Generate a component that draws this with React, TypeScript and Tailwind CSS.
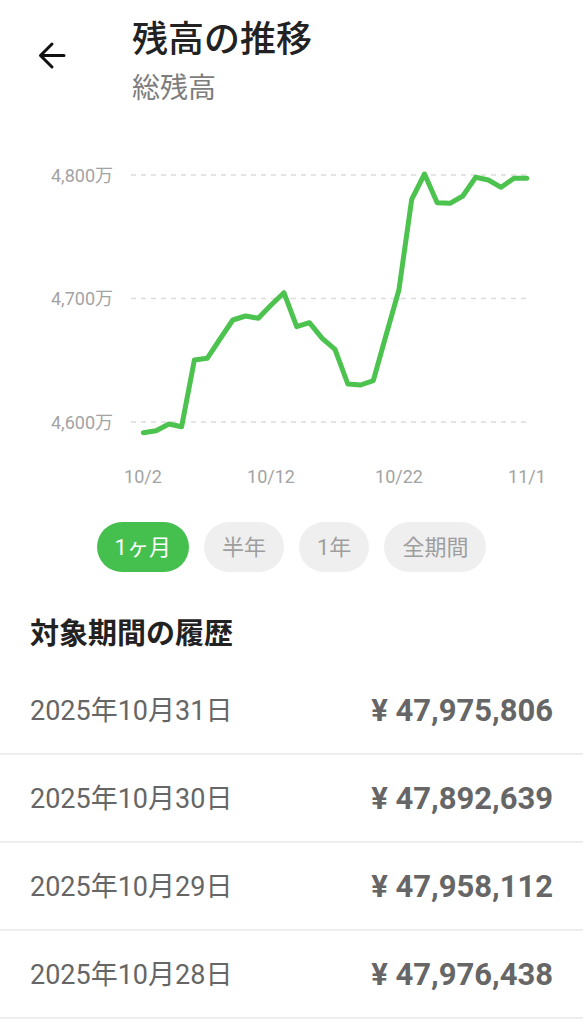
import React from "react";

const ys = [
  432.7, 430.7, 424, 426.7, 360, 358.3, 339, 320, 316, 318.3, 305, 292.7, 326.7,
  322.7, 338.3, 349.3, 384, 385, 380.7, 335, 290, 199.3, 174, 202.7, 203.3, 196,
  177.3, 180, 187.3, 178.3, 178.3,
];

const points = ys.map((y, i) => `${(143.3 + i * 12.78).toFixed(1)},${y}`).join(" ");

const grid = [
  { y: 175, label: "4,800万" },
  { y: 298.5, label: "4,700万" },
  { y: 422, label: "4,600万" },
];

const xLabels = [
  { x: 143, label: "10/2" },
  { x: 271, label: "10/12" },
  { x: 399, label: "10/22" },
  { x: 527, label: "11/1" },
];

const rows = [
  { date: "2025年10月31日", amount: "¥ 47,975,806" },
  { date: "2025年10月30日", amount: "¥ 47,892,639" },
  { date: "2025年10月29日", amount: "¥ 47,958,112" },
  { date: "2025年10月28日", amount: "¥ 47,976,438" },
];

const pills = [
  { label: "1ヶ月", active: true },
  { label: "半年", active: false },
  { label: "1年", active: false },
  { label: "全期間", active: false },
];

export default function App() {
  return (
    <div className="w-[583px] min-h-[1024px] bg-white font-[Roboto,'Noto_Sans_CJK_JP',sans-serif] overflow-hidden">
      {/* Header */}
      <div className="flex items-start pt-[20px]">
        <div className="ml-[37px] mt-[21px] h-[29px] w-[29px]">
          <svg width="29" height="29" viewBox="0 0 29 29" fill="none">
            <path
              d="M27 14.5H3.5M15 3L3.5 14.5L15 26"
              stroke="#111"
              strokeWidth="3"
              strokeLinecap="round"
              strokeLinejoin="round"
            />
          </svg>
        </div>
        <div className="ml-[66px] flex flex-col">
          <div className="text-[36px] leading-[40px] text-[#222] font-medium">残高の推移</div>
          <div className="mt-[13px] text-[28px] leading-[32px] text-[#7d7d7d]">総残高</div>
        </div>
      </div>

      {/* Chart */}
      <svg width="583" height="395" viewBox="0 105 583 395" className="block">
        {grid.map((g) => (
          <g key={g.label}>
            <line
              x1="131"
              x2="527"
              y1={g.y}
              y2={g.y}
              stroke="#dcdcdc"
              strokeWidth="1.5"
              strokeDasharray="5 5"
            />
            <text
              x="113"
              y={g.y}
              textAnchor="end"
              dominantBaseline="central"
              fontSize="18"
              fill="#a3a3a3"
            >
              {g.label}
            </text>
          </g>
        ))}
        {xLabels.map((l) => (
          <text
            key={l.label}
            x={l.x}
            y="476"
            textAnchor="middle"
            dominantBaseline="central"
            fontSize="18"
            fill="#a3a3a3"
          >
            {l.label}
          </text>
        ))}
        <polyline
          points={points}
          fill="none"
          stroke="#4cc24f"
          strokeWidth="5"
          strokeLinejoin="round"
          strokeLinecap="round"
        />
      </svg>

      {/* Period pills */}
      <div className="mt-[22px] flex justify-center gap-[15px]">
        {pills.map((p) => (
          <div
            key={p.label}
            className={
              p.active
                ? "flex h-[50px] items-center rounded-full bg-[#45c04f] px-[18px] text-[22px] text-white"
                : "flex h-[50px] items-center rounded-full bg-[#efefef] px-[18px] text-[22px] text-[#9e9e9e]"
            }
          >
            {p.label}
          </div>
        ))}
      </div>

      {/* History header */}
      <div className="mt-[44px] px-[30px] text-[29px] leading-[36px] font-bold text-[#222]">
        対象期間の履歴
      </div>

      {/* Rows */}
      <div className="mt-[15px] flex flex-col">
        {rows.map((r) => (
          <div
            key={r.date}
            className="flex h-[88px] items-center justify-between border-b-2 border-[#eeeeee] px-[30px] pt-[3px]"
          >
            <span className="text-[27px] text-[#666]">{r.date}</span>
            <span className="text-[31px] font-bold text-[#666]">{r.amount}</span>
          </div>
        ))}
      </div>
    </div>
  );
}
